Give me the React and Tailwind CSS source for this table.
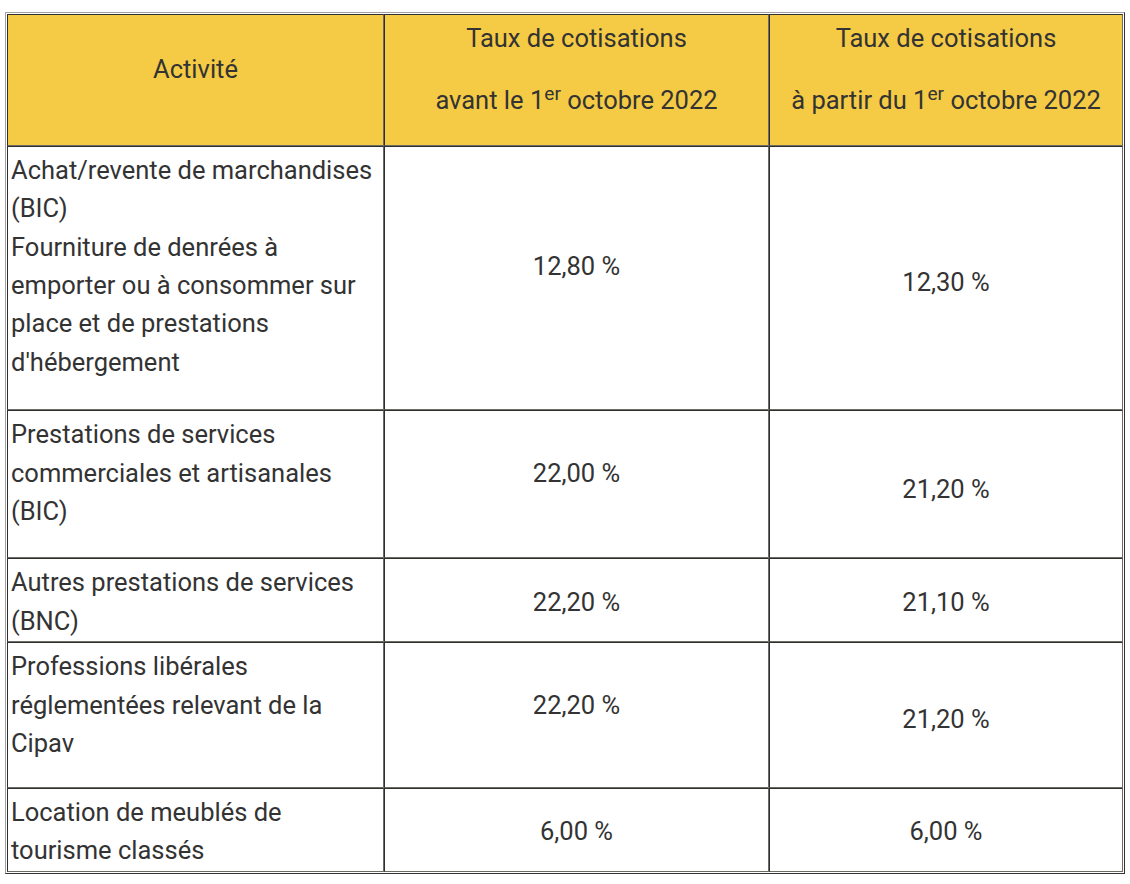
const rows = [
  {
    label: [
      "Achat/revente de marchandises (BIC)",
      "Fourniture de denrées à emporter ou à consommer sur place et de prestations d'hébergement",
    ],
    before: "12,80 %",
    after: "12,30 %",
    gap: "mb-[27px]",
  },
  {
    label: ["Prestations de services commerciales et artisanales (BIC)"],
    before: "22,00 %",
    after: "21,20 %",
    gap: "mb-[26px]",
  },
  {
    label: ["Autres prestations de services (BNC)"],
    before: "22,20 %",
    after: "21,10 %",
    gap: "",
  },
  {
    label: ["Professions libérales réglementées relevant de la Cipav"],
    before: "22,20 %",
    after: "21,20 %",
    gap: "mb-[23px]",
  },
  {
    label: ["Location de meublés de tourisme classés"],
    before: "6,00 %",
    after: "6,00 %",
    gap: "mb-px",
  },
];

const cellClass =
  "border border-t-[#2f2f2f] border-l-[#2f2f2f] border-b-[#6e6a64] border-r-[#6e6a64] px-[3px] pt-[4px] pb-[1px] align-middle";

const App = () => {
  return (
    <div className="min-h-[884px] bg-white pl-[5px] pt-[12px] font-['Roboto','Liberation_Sans',sans-serif] text-[25.5px] leading-[38.4px] text-[#333]">
      <table className="w-[1120px] table-fixed border-separate border-spacing-0 border border-t-[#a0a0a0] border-l-[#a0a0a0] border-b-[#333] border-r-[#333] p-px">
        <colgroup>
          <col className="w-[377px]" />
          <col className="w-[385px]" />
          <col className="w-[354px]" />
        </colgroup>
        <thead>
          <tr className="bg-[#f5cb45] text-center">
            <th className={`${cellClass} font-normal`}>
              <p className="mb-[25px]">Activité</p>
            </th>
            <th className={`${cellClass} font-normal`}>
              <p className="mb-[24px]">Taux de cotisations</p>
              <p className="mb-[24px]">
                avant le 1<sup>er</sup> octobre 2022
              </p>
            </th>
            <th className={`${cellClass} font-normal`}>
              <p className="mb-[24px]">Taux de cotisations</p>
              <p className="mb-[24px]">
                à partir du 1<sup>er</sup> octobre 2022
              </p>
            </th>
          </tr>
        </thead>
        <tbody>
          {rows.map((row, i) => (
            <tr key={i}>
              <td className={cellClass}>
                <p className={row.gap}>
                  {row.label.map((line, j) => (
                    <span key={j}>
                      {j > 0 && <br />}
                      {line}
                    </span>
                  ))}
                </p>
              </td>
              <td className={`${cellClass} text-center`}>
                <p className={row.gap}>{row.before}</p>
              </td>
              <td className={`${cellClass} text-center`}>
                <span className={row.gap && row.gap !== "mb-px" ? "relative top-[3px]" : ""}>
                  {row.after}
                </span>
              </td>
            </tr>
          ))}
        </tbody>
      </table>
    </div>
  );
};

export default App;
